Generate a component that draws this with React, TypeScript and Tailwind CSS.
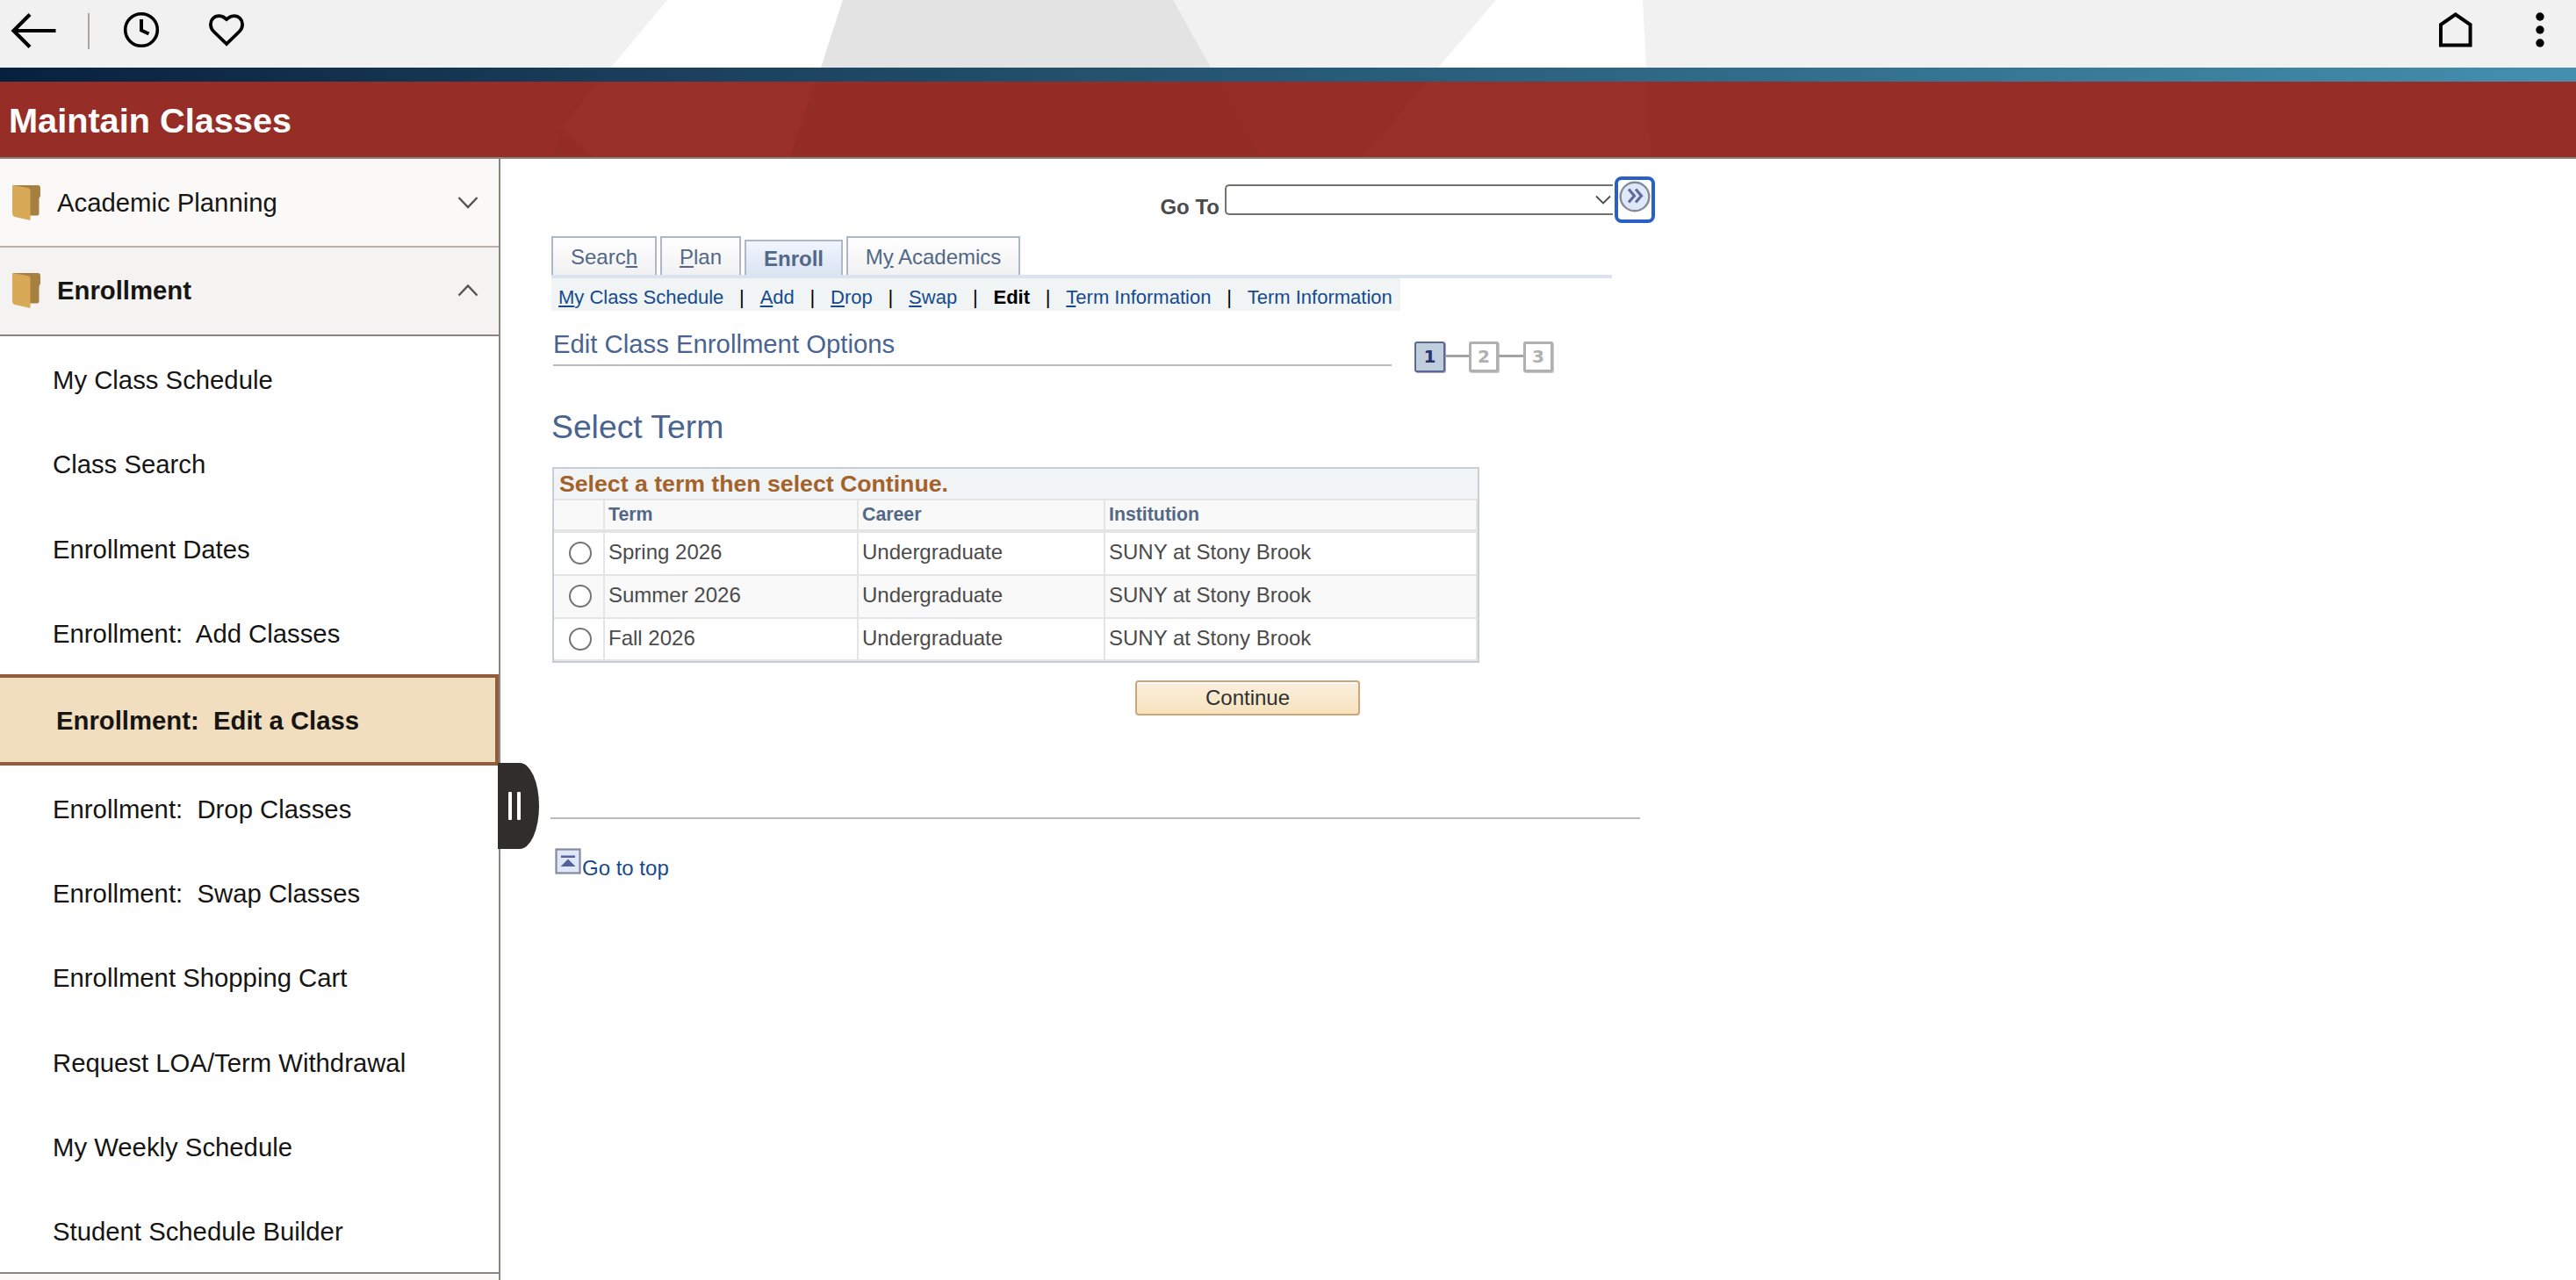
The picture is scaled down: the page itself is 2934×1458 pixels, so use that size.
import clsx from 'clsx'

const menuItems = [
	'My Class Schedule',
	'Class Search',
	'Enrollment Dates',
	'Enrollment:  Add Classes',
	'Enrollment:  Edit a Class',
	'Enrollment:  Drop Classes',
	'Enrollment:  Swap Classes',
	'Enrollment Shopping Cart',
	'Request LOA/Term Withdrawal',
	'My Weekly Schedule',
	'Student Schedule Builder',
]

const terms = ['Spring 2026', 'Summer 2026', 'Fall 2026']

function FolderIcon() {
	return (
		<svg width="32" height="40" viewBox="0 0 32 40" className="shrink-0">
			<path d="M0 0H29Q32 0 32 3V12L30.500 15V32Q30.500 34.500 28 34.500H18L4 2Z" fill="#a58041" />
			<path d="M0 0L18 3Q20.500 4 20.500 6V40L3 36Q0 35 0 32Z" fill="#d8a957" />
		</svg>
	)
}

function Chevron({ up }: { up?: boolean }) {
	return (
		<svg width="24" height="16" viewBox="0 0 24 16" fill="none" stroke="#55514e" strokeWidth="2.4">
			<path d={up ? 'M1.500 13.500L12 2.500L22.500 13.500' : 'M1.500 2L12 13L22.500 2'} />
		</svg>
	)
}

function TopBar() {
	return (
		<div className="relative flex h-[77px] items-start bg-[#f1f1f1]">
			<svg className="absolute inset-0" width="2934" height="77">
				<polygon points="760,0 960,0 935,77 696,77" fill="#fff" />
				<polygon points="960,0 1336,0 1379,77 935,77" fill="#e3e3e3" />
				<polygon points="1704,0 1871,0 1875,77 1638,77" fill="#fff" />
			</svg>
			<svg width="300" height="60" className="relative" fill="none" stroke="#000" strokeWidth="4.200">
				<path d="M15 35H63.500M34 16.500L15.500 35L34 53.500" />
				<path d="M101 15V56" stroke="#aaa5a1" strokeWidth="2" />
				<circle cx="161" cy="34" r="18.300" strokeWidth="3.600" />
				<path d="M161 22V34.500L169.500 38.500" strokeWidth="4" />
				<path
					d="M258 50L243.500 36C239 31.500 238.800 25 242.500 21C246.500 17 252.500 17.500 256 20.500L258 22L260 20.500C263.500 17.500 269.500 17 273.500 21C277.200 25 277 31.500 272.500 36Z"
					strokeWidth="3.800"
				/>
			</svg>
			<svg width="130" height="60" className="relative mr-[26px] ml-auto">
				<path d="M2 51.500V28L18.800 16.500L35.600 28V51.500Z" fill="none" stroke="#000" strokeWidth="4" />
				<circle cx="115" cy="19" r="4.700" />
				<circle cx="115" cy="34" r="4.700" />
				<circle cx="115" cy="49" r="4.700" />
			</svg>
		</div>
	)
}

function TitleBar() {
	return (
		<div className="relative flex h-[88px] items-center border-b-2 border-[#8b8580] bg-[#962e27] pt-[2px] pl-[10px]">
			<svg className="absolute inset-0" width="2934" height="86">
				<polygon points="683,0 929,0 900,86 675,86 637,52" fill="#982f28" />
				<polygon points="637,56 675,86 632,86" fill="#932d25" />
				<polygon points="929,0 1391,0 1437,86 900,86" fill="#932d25" />
				<polygon points="1624,0 1875,0 1881,86 1552,86" fill="#982f28" />
			</svg>
			<h1 className="relative text-[39.7px] leading-[48px] font-bold text-white">Maintain Classes</h1>
		</div>
	)
}

function FolderRow({ label, open }: { label: string; open?: boolean }) {
	return (
		<div
			className={clsx(
				'flex h-[101px] shrink-0 items-center border-b-2 pr-[23px] pl-[14px]',
				open ? 'border-[#8b8580] bg-[#f4f3f1] pb-[2px] font-bold' : 'border-[#bab1aa] bg-[#fbf9f8]',
			)}
		>
			<FolderIcon />
			<span className="ml-[19px] flex-1">{label}</span>
			<Chevron up={open} />
		</div>
	)
}

function Sidebar() {
	return (
		<aside className="relative flex w-[570px] shrink-0 flex-col border-r-2 border-[#8b8580] text-[29.3px] leading-[34px] text-[#161513]">
			<FolderRow label="Academic Planning" />
			<FolderRow label="Enrollment" open />
			<ul className="flex h-[1068px] shrink-0 flex-col border-b-2 border-[#8b8580]">
				{menuItems.map((item) =>
					item.includes('Edit') ? (
						<li
							key={item}
							className="flex h-[104px] shrink-0 items-center border-y-4 border-r-4 border-[#935c3c] bg-[#f1debf] pt-[2px] pl-[64px] font-bold whitespace-pre"
						>
							{item}
						</li>
					) : (
						<li key={item} className="flex flex-1 items-center pt-[4px] pl-[60px] whitespace-pre">
							{item}
						</li>
					),
				)}
			</ul>
			<div className="flex-1 bg-[#fbf9f8]" />
			<button className="absolute top-[688px] left-[567px] flex h-[98px] w-[47px] items-center gap-[6px] rounded-r-[22px_49px] bg-[#312d2a] pl-[12px]">
				<span className="h-[32px] w-[4px] rounded-[1px] bg-white" />
				<span className="h-[32px] w-[4px] rounded-[1px] bg-white" />
			</button>
		</aside>
	)
}

function GoTo() {
	return (
		<div className="flex h-[88px] w-[1257px] items-start justify-end pt-[20px]">
			<label className="mt-[21px] mr-[6px] text-[24px] leading-[28px] font-bold text-[#4b4b4b]">Go To</label>
			<div className="mt-[9px] flex h-[35px] w-[442px] items-center justify-end rounded-l-[5px] border-2 border-r-0 border-[#72736f] pr-[2px]">
				<svg width="18" height="12" viewBox="0 0 18 12" fill="none" stroke="#4b4b4b" strokeWidth="1.800">
					<path d="M1 1.500L9 9.500L17 1.500" />
				</svg>
			</div>
			<button className="ml-[2px] flex h-[53px] w-[46px] justify-center rounded-[8px] border-4 border-[#2860c5] pt-[1px]">
				<svg width="36" height="36" viewBox="0 0 36 36" fill="none" className="shrink-0">
					<circle cx="18" cy="18" r="16.300" fill="#dfe8f8" stroke="#85899c" strokeWidth="2.400" />
					<path d="M11 9.500L17.500 17L11 24.500M19 9.500L25.500 17L19 24.500" stroke="#5e6b9f" strokeWidth="3.200" />
				</svg>
			</button>
		</div>
	)
}

const tabClass = 'flex items-center justify-center border-2 border-b-0 border-[#adb7c6] bg-linear-to-b pt-px'
const plainTab = 'h-[44px] from-white to-[#f1f1f3]'

function Tabs() {
	return (
		<div className="flex h-[48px] w-[1208px] items-end gap-[4px] border-b-4 border-[#dbe3f1] text-[24px] leading-[28px] text-[#526886]">
			<div className={clsx(tabClass, plainTab, 'w-[120px]')}>
				<span>
					Searc<u>h</u>
				</span>
			</div>
			<div className={clsx(tabClass, plainTab, 'w-[92px]')}>
				<span>
					<u>P</u>lan
				</span>
			</div>
			<div className={clsx(tabClass, 'h-[40px] w-[112px] from-[#f1f5fe] to-[#dbe4f2] font-bold')}>Enroll</div>
			<div className={clsx(tabClass, plainTab, 'w-[198px]')}>
				<span>
					M<u>y</u> Academics
				</span>
			</div>
		</div>
	)
}

function Divider() {
	return <span className="text-black">|</span>
}

function SubNav() {
	return (
		<nav className="flex h-[37px] w-[967px] items-center gap-[17.8px] bg-[#f0f4f5] pt-[6px] pl-[8px] text-[22px] leading-[26px] text-[#174a8c]">
			<span>
				<u>M</u>y Class Schedule
			</span>
			<Divider />
			<span>
				<u>A</u>dd
			</span>
			<Divider />
			<span>
				<u>D</u>rop
			</span>
			<Divider />
			<span>
				<u>S</u>wap
			</span>
			<Divider />
			<b className="text-black">Edit</b>
			<Divider />
			<span>
				<u>T</u>erm Information
			</span>
			<Divider />
			<span>Term Information</span>
		</nav>
	)
}

const idleStep =
	'flex h-[35px] w-[34px] items-center justify-center rounded-[2px] border-[3px] border-[#b0b0b0] pb-px text-[#b0b0b0] shadow-[1px_1px_0_#c9c9c9]'

function Steps() {
	return (
		<div className="mt-[35px] ml-[26px] flex items-start font-['DejaVu_Sans',sans-serif] text-[20px] leading-[28px] font-bold">
			<span className="flex h-[35px] w-[35px] items-center justify-center rounded-[3px] border-2 border-[#5a6899] bg-[#c0cedb] pb-px text-[#27346f] shadow-[1px_1px_0_#a9a9ad]">
				1
			</span>
			<span className="mt-[15px] h-[3px] w-[27px] bg-[#a3a3a3]" />
			<span className={idleStep}>2</span>
			<span className="mt-[15px] h-[3px] w-[28px] bg-[#a3a3a3]" />
			<span className={idleStep}>3</span>
		</div>
	)
}

const cell = 'border-r-2 border-[#e4e4e4] pl-[4px]'

function TermTable() {
	return (
		<div className="w-[1056px] border-2 border-[#c8ccd7] text-[24px] leading-[28px] text-[#4b4b4b]">
			<h3 className="h-[36px] border-b-2 border-[#e4e4e4] bg-[#f0f4f5] pl-[6px] text-[26.67px] leading-[34px] font-bold text-[#a4622a]">
				Select a term then select Continue.
			</h3>
			<div className="grid h-[37px] grid-cols-[58px_289px_281px_424px] border-b-4 border-[#e4e4e4] bg-[#f9f9f9] text-[21.3px] leading-[32px] font-bold text-[#526886]">
				<div className={cell} />
				<div className={cell}>Term</div>
				<div className={cell}>Career</div>
				<div className={cell}>Institution</div>
			</div>
			{terms.map((term, i) => (
				<div
					key={term}
					className={clsx(
						'grid grid-cols-[58px_289px_281px_424px] border-b-2 border-[#e4e4e4] leading-[44px]',
						i === 1 && 'bg-[#f9f9f9]',
						i === 2 ? 'h-[48px]' : 'h-[49px]',
					)}
				>
					<div className="flex items-center justify-center border-r-2 border-[#e4e4e4] pb-px pl-[3px]">
						<span className="h-[26px] w-[26px] rounded-full border-2 border-[#757575] bg-white" />
					</div>
					<div className={cell}>{term}</div>
					<div className={cell}>Undergraduate</div>
					<div className={cell}>SUNY at Stony Brook</div>
				</div>
			))}
		</div>
	)
}

export default function App() {
	return (
		<div className="flex h-[1458px] w-[2934px] flex-col overflow-hidden bg-white font-['Liberation_Sans',Arial,sans-serif]">
			<TopBar />
			<div className="h-[16px] bg-[linear-gradient(90deg,#08203f_0%,#183b58_22%,#2f6a87_66%,#458fae_100%)]" />
			<TitleBar />
			<div className="flex min-h-0 flex-1">
				<Sidebar />
				<main className="flex flex-1 flex-col items-start pl-[58px]">
					<GoTo />
					<Tabs />
					<SubNav />
					<div className="flex h-[104px] items-start">
						<h2 className="ml-[2px] h-[63px] w-[955px] border-b-2 border-[#bbbbbb] pt-[21px] text-[29.3px] leading-[34px] text-[#4a6491]">
							Edit Class Enrollment Options
						</h2>
						<Steps />
					</div>
					<h2 className="h-[74px] pt-[6px] text-[37.3px] leading-[44px] text-[#4a6491]">Select Term</h2>
					<div className="ml-px">
						<TermTable />
					</div>
					<button className="mt-[20px] ml-[665px] h-[40px] w-[256px] rounded-[4px] border-2 border-[#d0a478] bg-linear-to-b from-[#fbeedd] to-[#f6e3bd] text-[24px] leading-[34px] text-[#2f2f2f] shadow-[inset_0_2px_0_#fff]">
						Continue
					</button>
					<div className="mt-[116px] -ml-px h-[2px] w-[1241px] bg-[#bbbbbb]" />
					<a className="mt-[33px] ml-[4px] flex items-start text-[24px] leading-[28px] text-[#174a8c]">
						<svg width="30" height="30" viewBox="0 0 30 30">
							<rect x="1.500" y="1.500" width="27" height="27" fill="#dfe8f8" stroke="#85899c" strokeWidth="2.200" />
							<path d="M7 8.500H23V11H7ZM15 12.500L23.500 21H6.500Z" fill="#55629a" />
						</svg>
						<span className="mt-[9px] ml-px">Go to top</span>
					</a>
				</main>
			</div>
		</div>
	)
}
